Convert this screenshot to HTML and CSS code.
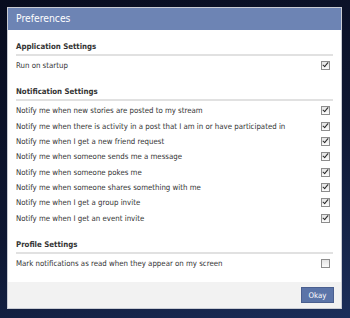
FILE: index.html
```html
<!DOCTYPE html>
<html lang="en">
<head>
  <meta charset="UTF-8">
  <title>Preferences</title>
  <link rel="stylesheet" href="styles.css">
</head>
<body>

  <div class="dialog">
    <div class="titlebar">Preferences</div>

    <div class="content">
      <h3 class="section">Application Settings</h3>
      <div class="row"><span>Run on startup</span><span class="box on"></span></div>

      <h3 class="section">Notification Settings</h3>
      <div class="row"><span>Notify me when new stories are posted to my stream</span><span class="box on"></span></div>
      <div class="row"><span>Notify me when there is activity in a post that I am in or have participated in</span><span class="box on"></span></div>
      <div class="row"><span>Notify me when I get a new friend request</span><span class="box on"></span></div>
      <div class="row"><span>Notify me when someone sends me a message</span><span class="box on"></span></div>
      <div class="row"><span>Notify me when someone pokes me</span><span class="box on"></span></div>
      <div class="row"><span>Notify me when someone shares something with me</span><span class="box on"></span></div>
      <div class="row"><span>Notify me when I get a group invite</span><span class="box on"></span></div>
      <div class="row"><span>Notify me when I get an event invite</span><span class="box on"></span></div>

      <h3 class="section">Profile Settings</h3>
      <div class="row"><span>Mark notifications as read when they appear on my screen</span><span class="box"></span></div>
    </div>

    <div class="footer">
      <button class="okay">Okay</button>
    </div>
  </div>

</body>
</html>
```

FILE: styles.css
```css
body {
  margin: 0;
  width: 350px;
  height: 318px;
  overflow: hidden;
  background: linear-gradient(160deg, #080c1e 0%, #0e1732 55%, #1b2e5a 100%);
  font-family: 'DejaVu Sans Condensed', 'DejaVu Sans', sans-serif;
}
.dialog {
  margin: 7px 0 0 7px;
  width: 333px;
  height: 300px;
  background: #fff;
  border: 1px solid #c9ccd4;
  display: flex;
  flex-direction: column;
}
.titlebar {
  height: 22px;
  line-height: 21px;
  background-color: #6d84b4;
  color: #fff;
  font-size: 10.3px;
  padding-left: 8px;
}
.content {
  flex: 1;
  padding: 0 8px 0 8px;
}
.section {
  margin: 10px 0 0;
  font-size: 7.8px;
  font-weight: bold;
  color: #333;
  line-height: 14px;
  border-bottom: 2px solid #e1e1e1;
}
.section + .row {
  margin-top: 2px;
}
.row + .section {
  margin-top: 12px;
}
.row {
  display: flex;
  justify-content: space-between;
  align-items: center;
  height: 15.3px;
  font-size: 7.8px;
  color: #333;
  padding-right: 3px;
}
.box {
  width: 7px;
  height: 7px;
  border: 1px solid #8d8d8d;
  background: linear-gradient(#e4e4e4, #fbfbfb);
  position: relative;
}
.box.on::after {
  content: "";
  position: absolute;
  left: 2px;
  top: -1px;
  width: 2px;
  height: 5px;
  border: solid #2a2a2a;
  border-width: 0 1.5px 1.5px 0;
  transform: rotate(40deg);
}
.footer {
  height: 26px;
  background-color: #f2f2f2;
  display: flex;
  justify-content: flex-end;
  align-items: center;
  padding-right: 7px;
}
.okay {
  width: 33px;
  height: 16px;
  padding: 0;
  background-color: #5b74a8;
  border: 1px solid #4a5f8f;
  color: #fff;
  font-family: 'DejaVu Sans Condensed', sans-serif;
  font-size: 7.8px;
}
```
